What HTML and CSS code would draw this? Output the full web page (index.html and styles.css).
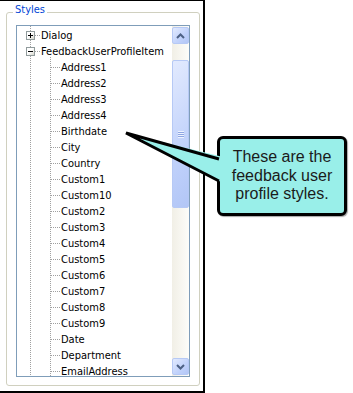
FILE: index.html
```html
<!DOCTYPE html>
<html lang="en">
<head>
    <meta charset="UTF-8">
    <title>Styles</title>
    <link rel="stylesheet" href="styles.css">
</head>
<body>
    <div class="frame">
        <div class="group">
            <div class="legend">Styles</div>
            <div class="tree">
                <ul class="items">
                    <li class="row root"><span class="toggle plus"></span><span class="dash"></span><span class="label">Dialog</span></li>
                    <li class="row root"><span class="toggle"></span><span class="dash"></span><span class="label">FeedbackUserProfileItem</span></li>
                    <li class="row child"><span class="dash"></span><span class="label">Address1</span></li>
                    <li class="row child"><span class="dash"></span><span class="label">Address2</span></li>
                    <li class="row child"><span class="dash"></span><span class="label">Address3</span></li>
                    <li class="row child"><span class="dash"></span><span class="label">Address4</span></li>
                    <li class="row child"><span class="dash"></span><span class="label">Birthdate</span></li>
                    <li class="row child"><span class="dash"></span><span class="label">City</span></li>
                    <li class="row child"><span class="dash"></span><span class="label">Country</span></li>
                    <li class="row child"><span class="dash"></span><span class="label">Custom1</span></li>
                    <li class="row child"><span class="dash"></span><span class="label">Custom10</span></li>
                    <li class="row child"><span class="dash"></span><span class="label">Custom2</span></li>
                    <li class="row child"><span class="dash"></span><span class="label">Custom3</span></li>
                    <li class="row child"><span class="dash"></span><span class="label">Custom4</span></li>
                    <li class="row child"><span class="dash"></span><span class="label">Custom5</span></li>
                    <li class="row child"><span class="dash"></span><span class="label">Custom6</span></li>
                    <li class="row child"><span class="dash"></span><span class="label">Custom7</span></li>
                    <li class="row child"><span class="dash"></span><span class="label">Custom8</span></li>
                    <li class="row child"><span class="dash"></span><span class="label">Custom9</span></li>
                    <li class="row child"><span class="dash"></span><span class="label">Date</span></li>
                    <li class="row child"><span class="dash"></span><span class="label">Department</span></li>
                    <li class="row child"><span class="dash"></span><span class="label">EmailAddress</span></li>
                </ul>
                <div class="scroll">
                    <div class="btn">
                        <svg width="9" height="6" viewBox="0 0 9 6"><path d="M1 5 L4.5 1.5 L8 5" fill="none" stroke="#4d6185" stroke-width="2"/></svg>
                    </div>
                    <div class="thumb">
                        <span class="grip"></span>
                    </div>
                    <div class="btn down">
                        <svg width="9" height="6" viewBox="0 0 9 6"><path d="M1 1 L4.5 4.5 L8 1" fill="none" stroke="#4d6185" stroke-width="2"/></svg>
                    </div>
                </div>
            </div>
        </div>
    </div>

    <div class="callout">These are the<br>feedback user<br>profile styles.</div>
    <svg class="pointer" width="353" height="393" viewBox="0 0 353 393">
        <polygon points="126,133 223,157 223,183" fill="#99efe9"/>
        <polyline points="219,159 126,133 219,181" fill="none" stroke="#000" stroke-width="3"/>
    </svg>
</body>
</html>
```

FILE: styles.css
```css
body { margin: 0; background: #fff; font-family: "DejaVu Sans Condensed", "Liberation Sans", sans-serif; font-size: 11px; }

.frame { width: 203px; height: 390px; border-top: 1px solid #000; border-right: 2px solid #000; border-bottom: 2px solid #000; }
.group { margin: 11px 0 0 6px; width: 194px; height: 374px; box-sizing: border-box; border: 1px solid #d0d0bf; border-radius: 3px; }
.legend { width: max-content; margin: -10px 0 0 6px; padding: 0 2px; background: #fff; color: #0046d5; line-height: 13px; }

.tree { margin: 9px 0 0 9px; width: 174px; height: 352px; box-sizing: border-box; border: 1px solid #7f9db9; display: flex; }
.items {
    flex: 1; margin: 0; padding: 1px 0 0; list-style: none; overflow: hidden;
    background-image: repeating-linear-gradient(#a0a0a0 0 1px, transparent 1px 2px), repeating-linear-gradient(#a0a0a0 0 1px, transparent 1px 2px);
    background-size: 1px 100%, 1px 100%;
    background-position: 13px 0, 33px 31px;
    background-repeat: no-repeat;
}
.row { height: 16px; display: flex; align-items: flex-start; white-space: nowrap; color: #000; }
.root { padding-left: 9px; }
.child { padding-left: 34px; }
.label { padding: 1px 0 0 1px; line-height: 16px; }
.dash { flex: none; width: 9px; height: 1px; margin-top: 8px; background: repeating-linear-gradient(to right, #a0a0a0 0 1px, transparent 1px 2px); }
.root .dash { width: 5px; }
.toggle { flex: none; position: relative; width: 9px; height: 9px; margin-top: 4px; box-sizing: border-box; border: 1px solid #919b9c; background: linear-gradient(135deg, #fff 45%, #d6d6cc); }
.toggle::before { content: ""; position: absolute; left: 1px; top: 3px; width: 5px; height: 1px; background: #000; }
.plus::after { content: ""; position: absolute; left: 3px; top: 1px; width: 1px; height: 5px; background: #000; }

.scroll { flex: none; width: 17px; display: flex; flex-direction: column; background: linear-gradient(to right, #f1efe6, #fdfdfa); }
.btn, .thumb { box-sizing: border-box; border: 1px solid #b6c9f5; border-radius: 2px; background: linear-gradient(135deg, #e2eafe, #c1d2fb 60%, #b2c6f6); }
.btn { height: 17px; margin-top: 1px; display: flex; align-items: center; justify-content: center; }
.btn.down { margin-top: auto; margin-bottom: 1px; }
.thumb { margin-top: 16px; height: 148px; display: flex; align-items: center; justify-content: center; }
.grip { width: 6px; height: 7px; background: repeating-linear-gradient(#eef3fe 0 1px, #8ea6e3 1px 2px); }

.callout {
    position: absolute; left: 217px; top: 136px; width: 130px; height: 80px; box-sizing: border-box;
    border: 3px solid #000; border-radius: 6px; background: #99efe9; box-shadow: 1px 1px 1px rgba(0, 0, 0, 0.35);
    display: flex; align-items: center; justify-content: center; text-align: center;
    font-family: "Liberation Sans", Arial, sans-serif; font-size: 16px; line-height: 18.5px; color: #1b1b1b;
}
.pointer { position: absolute; left: 0; top: 0; pointer-events: none; }
```
